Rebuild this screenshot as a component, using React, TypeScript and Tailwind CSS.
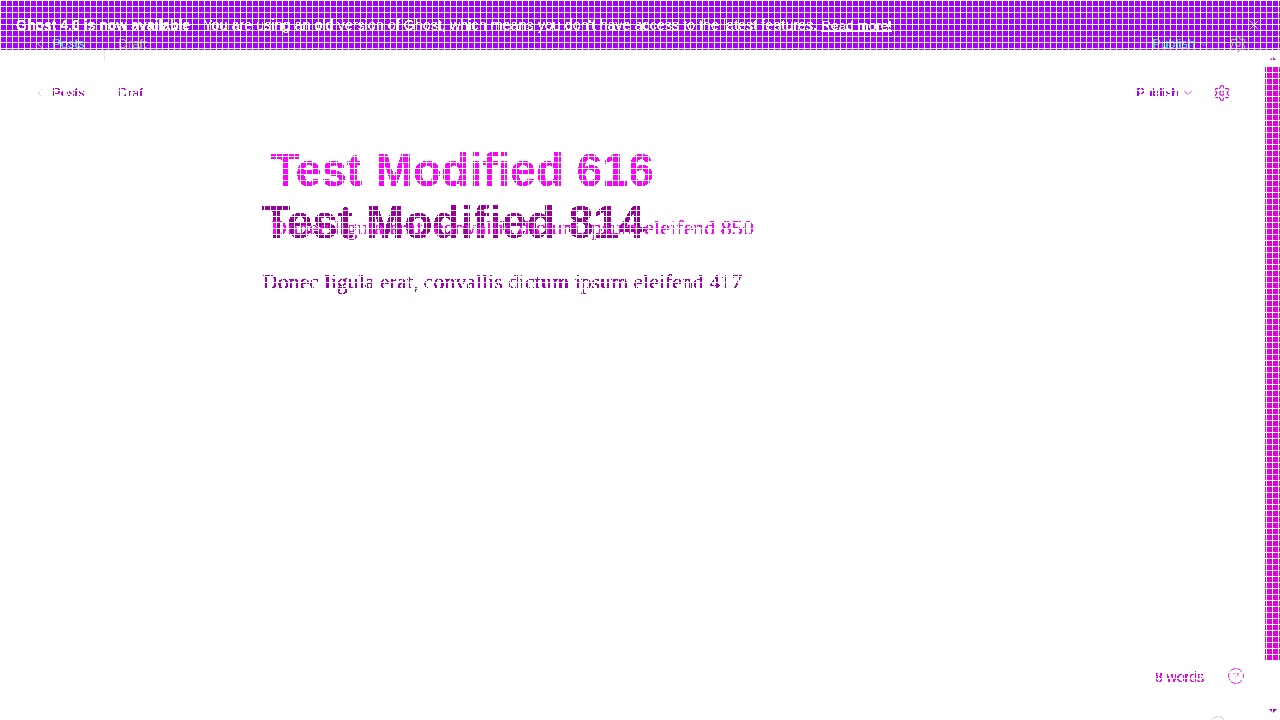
import { ChevronDown, ChevronLeft, CircleHelp, Settings, X } from 'lucide-react'

const gridClassName = [
  'pointer-events-none absolute inset-0',
  'bg-[linear-gradient(to_right,#fff_1px,transparent_1px),linear-gradient(to_bottom,#fff_1px,transparent_1px)]',
  'bg-[size:6px_6px]',
].join(' ')

const crisp = '[filter:url(#crisp)]'

type TopBarProps = {
  posts: string
  draft: string
  publish: string
  gear: string
  right: string
}

function TopBar({ posts, draft, publish, gear, right }: TopBarProps) {
  return (
    <div className="flex w-full items-center text-[13px]">
      <ChevronLeft className="ml-[32px] size-[16px] text-[#c4c8c4]" strokeWidth={1.25} />
      <span className={`ml-[4px] ${posts} ${crisp}`}>Posts</span>
      <span className={`ml-[34px] ${draft} ${crisp}`}>Draft</span>
      <span className={`ml-auto ${publish} ${crisp}`}>Publish</span>
      <ChevronDown className={`ml-[3px] size-[12px] ${publish}`} strokeWidth={1.75} />
      <Settings className={`ml-[19px] size-[18px] ${gear} ${right}`} strokeWidth={1.5} />
    </div>
  )
}

export default function App() {
  return (
    <div className="relative flex h-[720px] w-[1280px] flex-col overflow-hidden bg-white font-['Liberation_Sans',sans-serif]">
      <svg className="absolute size-0" aria-hidden>
        <filter id="crisp" colorInterpolationFilters="sRGB">
          <feComponentTransfer>
            <feFuncA type="discrete" tableValues="0 1 1" />
          </feComponentTransfer>
        </filter>
      </svg>

      <div className="relative flex h-[50px] shrink-0 items-center bg-[#a800ff] pt-[1px] text-white">
        <div className={`flex items-center whitespace-nowrap pl-[16px] ${crisp}`}>
          <b className="text-[14px]">Ghost 4.0 is now available</b>
          <span className="ml-[13px] text-[14.35px]">
            You are using an old version of Ghost, which means you don't have access to the latest features.{' '}
            <u className="text-[13.6px]">Read more!</u>
          </span>
        </div>
        <X className="absolute right-[18px] top-[17px] size-[16px] text-white" strokeWidth={1.25} />
        <div className="absolute inset-x-0 top-[34px]">
          <TopBar
            posts="text-[#4fd0d8]"
            draft="text-[#a0a0a0]"
            publish="text-[#40d0e0]"
            gear="text-[#a0b8a0]"
            right="mr-[33px]"
          />
        </div>
      </div>
      <div className="absolute left-[104px] top-[50px] h-[10px] w-px bg-[#dbe5ee]" />

      <div className="flex min-h-0 flex-1">
        <main className="flex min-w-0 flex-1 flex-col">
          <div className="flex h-[86px] shrink-0 items-center">
            <TopBar
              posts="text-[#c000e0]"
              draft="text-[#c000e0]"
              publish="text-[#b000f0]"
              gear="text-[#d000e0]"
              right="mr-[34px]"
            />
          </div>

          <div className="relative ml-[262px] flex-1">
            <div className={crisp}>
              <h1 className="mt-[60px] text-[46px] font-bold leading-[52px] whitespace-nowrap text-[#990099]">Test Modified 814</h1>
              <p className="mt-[19px] font-['Liberation_Serif',serif] text-[21.9px] leading-[30px] whitespace-nowrap text-[#a000b0]">
                Donec ligula erat, convallis dictum ipsum eleifend 417
              </p>
            </div>
            <div className={`absolute left-[9px] top-[8px] ${crisp}`}>
              <h1 className="text-[46px] font-bold leading-[52px] whitespace-nowrap text-[#ff00ff]">Test Modified 616</h1>
              <p className="mt-[17px] font-['Liberation_Serif',serif] text-[22px] leading-[30px] whitespace-nowrap text-[#ff00ff]">
                Donec ligula erat, convallis dictum ipsum eleifend 850
              </p>
            </div>
          </div>

          <div className="flex h-[60px] shrink-0 items-start justify-end pr-[20px] text-[14px] text-[#f000f0]">
            <span className={`mt-[7px] ${crisp}`}>8 words</span>
            <CircleHelp className="ml-[23px] mt-[7px] size-[18px]" strokeWidth={1.25} />
          </div>
        </main>

        <aside className="flex w-[15px] shrink-0 flex-col items-center">
          <svg className="mt-[7px] h-[4px] w-[8px] fill-[#d000d0]" viewBox="0 0 8 4"><path d="M4 0l4 4H0z" /></svg>
          <div className="mt-[6px] h-[593px] w-full bg-[#e600dd]" />
          <svg className="mt-[49px] h-[4px] w-[8px] fill-[#a000b0]" viewBox="0 0 8 4"><path d="M0 0h8L4 4z" /></svg>
        </aside>
      </div>

      <div className="absolute left-[1210px] top-[716px] size-[16px] rounded-full border border-[#c8c0d0]" />
      <div className={gridClassName} />
    </div>
  )
}
